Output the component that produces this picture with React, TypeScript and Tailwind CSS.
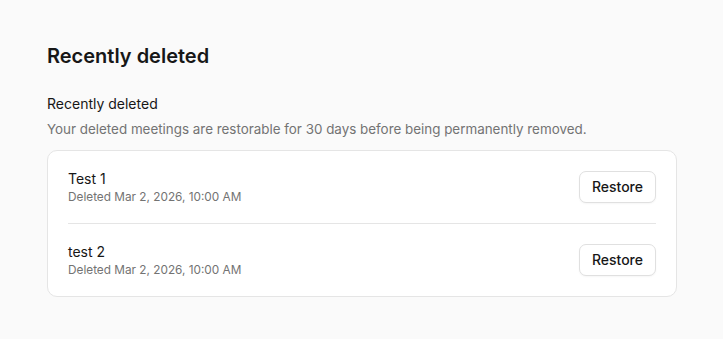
import React from "react";

const items = [
  { name: "Test 1", date: "Deleted Mar 2, 2026, 10:00 AM" },
  { name: "test 2", date: "Deleted Mar 2, 2026, 10:00 AM" },
];

export default function App() {
  return (
    <div
      className="min-h-[339px] w-full bg-[#fafafa] text-[#171717]"
      style={{ fontFamily: "Inter, 'Noto Sans', sans-serif" }}
    >
      <div className="pl-[47px] pr-[46px] pt-[42px]">
        <h1 className="text-[20px] font-semibold leading-[28px]">Recently deleted</h1>
        <div className="mt-[24px]">
          <h2 className="text-[14px] font-normal leading-[20px]">Recently deleted</h2>
          <p className="mt-[5px] text-[13.4px] leading-[20px] text-[#737373]">
            Your deleted meetings are restorable for 30 days before being permanently removed.
          </p>
        </div>
        <div className="mt-[11px] rounded-[10px] border border-[#e5e5e5] bg-white px-[20px]">
          {items.map((it, i) => (
            <div
              key={i}
              className={`flex items-center justify-between py-[18px] ${i > 0 ? "border-t border-[#e5e5e5]" : ""}`}
            >
              <div className="flex flex-col">
                <span className="text-[14px] leading-[20px]">{it.name}</span>
                <span className="text-[11.8px] leading-[16px] text-[#737373]">{it.date}</span>
              </div>
              <button className="h-[32px] rounded-[7px] border border-[#e0e0e0] bg-white px-[12px] text-[14px] font-medium leading-[20px] shadow-[0_1px_2px_rgba(0,0,0,0.04)]">
                Restore
              </button>
            </div>
          ))}
        </div>
      </div>
    </div>
  );
}
